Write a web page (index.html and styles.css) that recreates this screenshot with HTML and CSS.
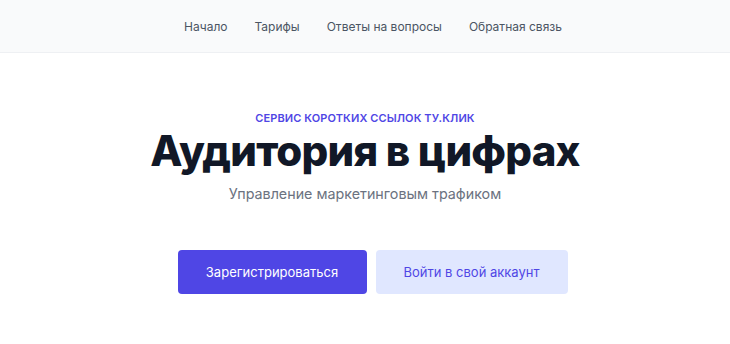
FILE: index.html
```html
<!DOCTYPE html>
<html lang="ru">
<head>
  <meta charset="UTF-8">
  <meta name="viewport" content="width=device-width, initial-scale=1.0">
  <title>ТУ.КЛИК</title>
  <link rel="stylesheet" href="styles.css">
</head>
<body>
  <header class="topbar">
    <nav class="nav">
      <a href="#">Начало</a>
      <a href="#">Тарифы</a>
      <a href="#">Ответы на вопросы</a>
      <a href="#">Обратная связь</a>
    </nav>
  </header>

  <main class="hero">
    <p class="eyebrow">Сервис коротких ссылок ту.клик</p>
    <h1>Аудитория в цифрах</h1>
    <p class="lead">Управление маркетинговым трафиком</p>
    <div class="actions">
      <a class="btn btn-primary" href="#">Зарегистрироваться</a>
      <a class="btn btn-secondary" href="#">Войти в свой аккаунт</a>
    </div>
  </main>
</body>
</html>
```

FILE: styles.css
```css
body {
  margin: 0;
  padding: 0;
  font-family: Inter, "Noto Sans", sans-serif;
  background-color: #ffffff;
  color: #111827;
}

.topbar {
  height: 52px;
  background-color: #f9fafb;
  border-bottom: 1px solid #eef0f3;
  display: flex;
  align-items: center;
  justify-content: center;
}

.nav {
  display: flex;
  gap: 27px;
  margin-left: 16px;
}

.nav a {
  font-size: 12px;
  color: #4b5563;
  text-decoration: none;
}

.hero {
  display: flex;
  flex-direction: column;
  align-items: center;
  padding-top: 58px;
}

.eyebrow {
  margin: 0;
  font-size: 11px;
  font-weight: 600;
  letter-spacing: 0.1px;
  text-transform: uppercase;
  color: #4f46e5;
}

h1 {
  margin: 2px 0 0;
  font-size: 42px;
  line-height: 48px;
  font-weight: 800;
  letter-spacing: -0.8px;
  color: #111827;
}

.lead {
  margin: 10px 0 0;
  font-size: 14.3px;
  color: #6b7280;
}

.actions {
  display: flex;
  gap: 9px;
  margin-top: 48px;
  margin-left: 15px;
}

.btn {
  display: flex;
  align-items: center;
  justify-content: center;
  height: 44px;
  border-radius: 4px;
  font-size: 13px;
  text-decoration: none;
}

.btn-primary {
  width: 189px;
  background-color: #4f46e5;
  color: #ffffff;
}

.btn-secondary {
  width: 192px;
  background-color: #e0e7ff;
  color: #4f46e5;
}
```
